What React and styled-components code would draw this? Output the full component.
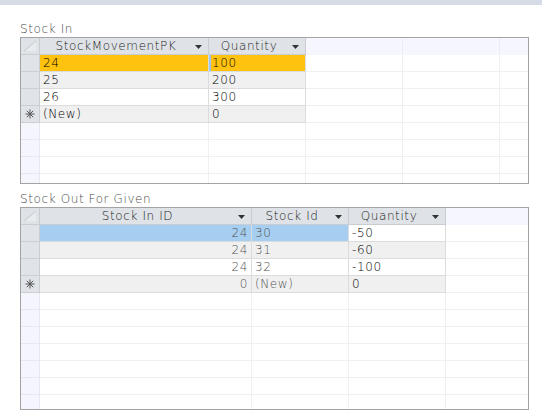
import React from 'react'
import styled, { createGlobalStyle } from 'styled-components'

const GlobalStyle = createGlobalStyle`
  body {
    margin: 0;
    background: #ffffff;
    font-family: "DejaVu Sans", "Liberation Sans", sans-serif;
  }
`

const colours = {
  strip: '#d6dce6',
  frame: '#a3a3a3',
  header: '#dfe2e7',
  headerLine: '#c9ccd1',
  headerEmpty: '#f5f6fe',
  headerEmptyLine: '#ebecf5',
  selector: '#e0e3e8',
  selectorLine: '#cbced3',
  selectorEmpty: '#f5f6fd',
  selectorEmptyLine: '#e6e7ef',
  rowLine: '#dcdcdc',
  emptyLine: '#f0f0f0',
  alt: '#f0f0f0',
  orange: '#ffc20e',
  blue: '#a6cef0',
}

const stockIn = {
  height: 147,
  columns: [
    { title: 'StockMovementPK', width: 169 },
    { title: 'Quantity', width: 97 },
  ],
  fillers: [97, 97, 97],
  rows: [
    { cells: ['24', '100'], selected: [colours.orange, colours.orange], cursor: 1 },
    { cells: ['25', '200'] },
    { cells: ['26', '300'] },
    { cells: ['(New)', '0'], isNew: true },
  ],
  emptyRows: 6,
}

const stockOut = {
  height: 203,
  columns: [
    { title: 'Stock In ID', width: 212, align: 'right', dim: true },
    { title: 'Stock Id', width: 97, dim: true },
    { title: 'Quantity', width: 97 },
  ],
  fillers: [97],
  rows: [
    { cells: ['24', '30', '-50'], selected: [colours.blue, colours.blue, '#ffffff'] },
    { cells: ['24', '31', '-60'] },
    { cells: ['24', '32', '-100'] },
    { cells: ['0', '(New)', '0'], isNew: true },
  ],
  emptyRows: 9,
}

function Corner() {
  return (
    <svg width="18" height="16" viewBox="0 0 18 16">
      <polygon points="3,13 15,3 15,13" fill="#e9ebee" />
      <line x1="3" y1="13" x2="15" y2="3" stroke="#c4c7cc" strokeWidth="1" />
    </svg>
  )
}

function DropArrow() {
  return (
    <ArrowIcon width="7" height="4" viewBox="0 0 7 4">
      <polygon points="0,0 7,0 3.5,4" fill="#333" />
    </ArrowIcon>
  )
}

function NewMark() {
  return (
    <svg width="10" height="10" viewBox="0 0 10 10">
      <g stroke="#555" strokeWidth="1">
        <line x1="5" y1="0.5" x2="5" y2="9.5" />
        <line x1="0.5" y1="5" x2="9.5" y2="5" />
        <line x1="1.8" y1="1.8" x2="8.2" y2="8.2" />
        <line x1="8.2" y1="1.8" x2="1.8" y2="8.2" />
      </g>
    </svg>
  )
}

function Datasheet({ data }) {
  const template = ['19px', ...data.columns.map(c => c.width + 'px'), ...data.fillers.map(w => w + 'px'), '1fr'].join(' ')
  const fillerCount = data.fillers.length + 1

  return (
    <Frame $height={data.height}>
      <Grid style={{ gridTemplateColumns: template }}>
        <HeaderCell>
          <Corner />
        </HeaderCell>
        {data.columns.map(col => (
          <HeaderCell key={col.title}>
            <HeaderTitle>{col.title}</HeaderTitle>
            <DropArrow />
          </HeaderCell>
        ))}
        {Array.from({ length: fillerCount }).map((_, i) => (
          <HeaderFiller key={'hf' + i} />
        ))}

        {data.rows.map((row, r) => (
          <React.Fragment key={'r' + r}>
            <Selector>{row.isNew && <NewMark />}</Selector>
            {row.cells.map((value, c) => {
              const col = data.columns[c]
              const bg = row.selected ? row.selected[c] : r % 2 === 1 ? colours.alt : '#ffffff'
              return (
                <DataCell
                  key={'c' + c}
                  $bg={bg}
                  $align={col.align}
                  $dim={col.dim}
                  $cursor={row.cursor === c}
                >
                  {value}
                </DataCell>
              )
            })}
            {Array.from({ length: fillerCount }).map((_, i) => (
              <EmptyCell key={'f' + i} />
            ))}
          </React.Fragment>
        ))}

        {Array.from({ length: data.emptyRows }).map((_, r) => (
          <React.Fragment key={'e' + r}>
            <EmptySelector />
            {data.columns.map((_, c) => (
              <EmptyCell key={'ec' + c} />
            ))}
            {Array.from({ length: fillerCount }).map((_, i) => (
              <EmptyCell key={'ef' + i} />
            ))}
          </React.Fragment>
        ))}
      </Grid>
    </Frame>
  )
}

export default function App() {
  return (
    <Page>
      <GlobalStyle />
      <TopStrip />
      <Body>
        <Label>Stock In</Label>
        <Datasheet data={stockIn} />
        <Label $gap>Stock Out For Given</Label>
        <Datasheet data={stockOut} />
      </Body>
    </Page>
  )
}

const Page = styled.div`
  width: 542px;
  height: 418px;
  overflow: hidden;
  background: #ffffff;
`

const TopStrip = styled.div`
  height: 5px;
  background: ${colours.strip};
`

const Body = styled.div`
  display: flex;
  flex-direction: column;
  padding: 16px 13px 0 20px;
`

const Label = styled.div`
  height: 16px;
  line-height: 16px;
  margin-top: ${props => (props.$gap ? '7px' : '0')};
  font-size: 12px;
  font-weight: 200;
  letter-spacing: 0.6px;
  color: #4a4a4a;
`

const Frame = styled.div`
  box-sizing: border-box;
  width: 509px;
  height: ${props => props.$height}px;
  border: 1px solid ${colours.frame};
  overflow: hidden;
`

const Grid = styled.div`
  display: grid;
  grid-auto-rows: 17px;
  font-size: 12px;
  font-weight: 200;
  letter-spacing: 0.6px;
`

const HeaderCell = styled.div`
  box-sizing: border-box;
  display: flex;
  align-items: center;
  background: ${colours.header};
  border-right: 1px solid ${colours.headerLine};
  border-bottom: 1px solid ${colours.headerLine};
  color: #222222;
  line-height: 16px;
  overflow: hidden;
`

const HeaderTitle = styled.span`
  flex: 1;
  text-align: center;
  white-space: nowrap;
`

const ArrowIcon = styled.svg`
  flex: none;
  margin: 1px 6px 0 3px;
`

const HeaderFiller = styled.div`
  box-sizing: border-box;
  background: ${colours.headerEmpty};
  border-right: 1px solid ${colours.headerEmptyLine};
`

const Selector = styled.div`
  box-sizing: border-box;
  display: flex;
  align-items: center;
  justify-content: center;
  background: ${colours.selector};
  border-right: 1px solid ${colours.selectorLine};
  border-bottom: 1px solid ${colours.selectorLine};
`

const EmptySelector = styled.div`
  box-sizing: border-box;
  background: ${colours.selectorEmpty};
  border-right: 1px solid ${colours.selectorEmptyLine};
  border-bottom: 1px solid ${colours.selectorEmptyLine};
`

const DataCell = styled.div`
  box-sizing: border-box;
  padding: 0 3px;
  line-height: 16px;
  white-space: nowrap;
  overflow: hidden;
  background: ${props => props.$bg};
  text-align: ${props => props.$align || 'left'};
  color: ${props => (props.$dim ? '#555555' : '#000000')};
  border-right: 1px solid ${colours.rowLine};
  border-bottom: 1px solid ${colours.rowLine};
  box-shadow: ${props => (props.$cursor ? 'inset 2px 0 0 #9cc6ee' : 'none')};
`

const EmptyCell = styled.div`
  box-sizing: border-box;
  background: #ffffff;
  border-right: 1px solid ${colours.emptyLine};
  border-bottom: 1px solid ${colours.emptyLine};
`
